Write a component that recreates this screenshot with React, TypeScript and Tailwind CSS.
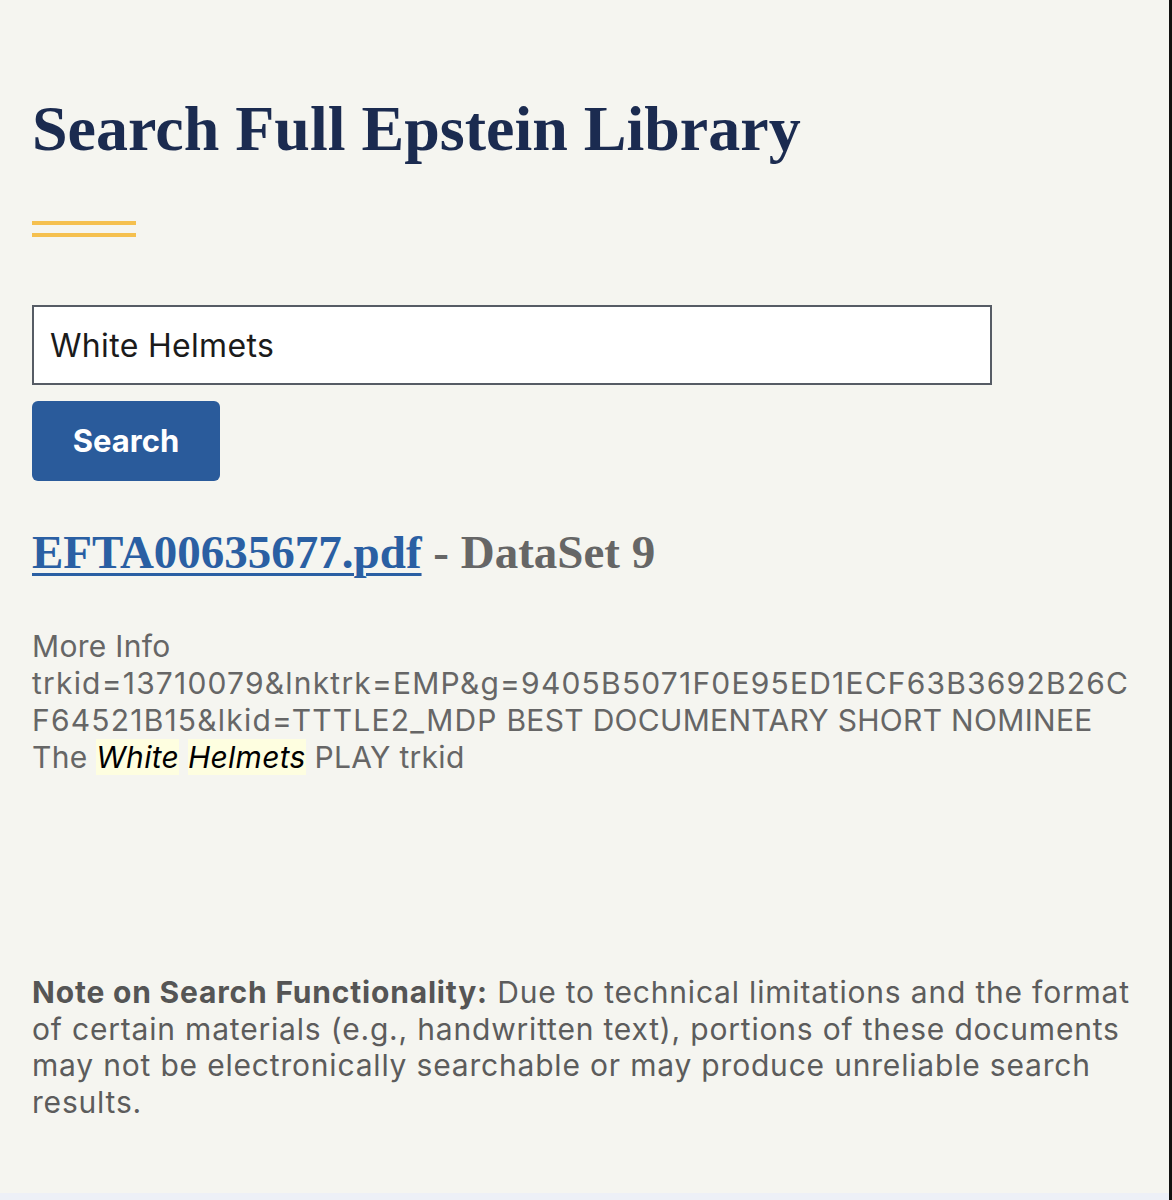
export default function App() {
  return (
    <div className="flex min-h-[1200px] w-full bg-[#f5f5f0]">
      <div className="flex min-w-0 flex-1 flex-col">
        <main className="flex-1 px-[32px] pt-[90px] pb-[73px]">
          <h1 className="font-['Liberation_Serif',serif] text-[64px] leading-[77px] font-bold text-[#1b2b50]">
            Search Full Epstein Library
          </h1>
          <div className="mt-[54px] flex w-[104px] flex-col gap-[8px]">
            <span className="block h-[4px] bg-[#f5c04f]" />
            <span className="block h-[4px] bg-[#f5c04f]" />
          </div>

          <form
            className="mt-[68px] flex flex-col items-start gap-[16px] font-['Inter',sans-serif]"
            onSubmit={(e) => e.preventDefault()}
          >
            <input
              type="text"
              defaultValue="White Helmets"
              className="h-[80px] w-[960px] border-2 border-[#565c65] bg-white px-[16px] text-[32px] tracking-[0.01em] text-[#1b1b1b] outline-none"
            />
            <button
              type="submit"
              className="h-[80px] w-[188px] rounded-[6px] bg-[#2a5b9b] text-[31px] font-bold text-white"
            >
              Search
            </button>
          </form>

          <h2 className="mt-[43px] font-['Liberation_Serif',serif] text-[47px] leading-[56px] font-bold text-[#666666]">
            <a href="#" className="text-[#2a5fa3] underline decoration-[3px] underline-offset-[5px]">
              EFTA00635677.pdf
            </a>{" "}
            - DataSet 9
          </h2>

          <p className="mt-[48px] font-['Inter',sans-serif] text-[30px] leading-[37px] tracking-[0.01em] text-[#666666] [overflow-wrap:anywhere]">
            More Info
            <br />
            <span className="tracking-[0.04em]">
              trkid=13710079&amp;lnktrk=EMP&amp;g=9405B5071F0E95ED1ECF63B3692B26CF64521B15&amp;lkid=TTTLE2_MDP
            </span>{" "}
            BEST DOCUMENTARY SHORT NOMINEE The <mark className="bg-[#fefee0] italic text-black">White</mark>{" "}
            <mark className="bg-[#fefee0] italic text-black">Helmets</mark> PLAY trkid
          </p>

          <p className="mt-[198px] font-['Inter',sans-serif] text-[30px] leading-[36.5px] tracking-[0.027em] text-[#5c5c5c]">
            <strong className="font-bold text-[#555555]">Note on Search Functionality:</strong> Due to technical
            limitations and the format of certain materials (e.g., handwritten text), portions of these documents may
            not be electronically searchable or may produce unreliable search results.
          </p>
        </main>
        <div className="h-[9px] bg-[#edf0f7]" />
      </div>
      <div className="w-[3px] shrink-0 bg-[#111111]" />
    </div>
  );
}
